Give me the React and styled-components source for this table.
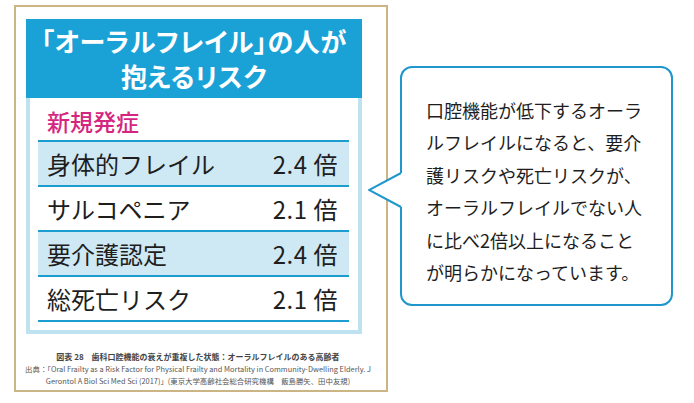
import React from "react";
import styled, { createGlobalStyle } from "styled-components";

const GlobalStyle = createGlobalStyle`
  html, body {
    margin: 0;
    padding: 0;
    background: #fff;
  }
  body {
    font-family: "Noto Sans CJK JP", "Noto Sans", sans-serif;
    color: #222;
  }
`;

const Page = styled.div`
  display: flex;
  align-items: flex-start;
  width: 694px;
  height: 403px;
  padding: 5px 0 0 14px;
  box-sizing: border-box;
`;

const Frame = styled.figure`
  margin: 0;
  width: 374px;
  height: 387px;
  box-sizing: border-box;
  border: 2px solid #cbb584;
  padding: 12px 24px 0 10px;
  display: flex;
  flex-direction: column;
`;

const Header = styled.h2`
  margin: 0;
  background: #1aa2d7;
  color: #fff;
  font-size: 26px;
  font-weight: 700;
  line-height: 35px;
  text-align: center;
  padding: 4px 0 5px;
  font-feature-settings: "palt";
  letter-spacing: 0.6px;
`;

const Panel = styled.div`
  border: 4px solid #bfe2f0;
  border-top: none;
  padding: 4px 9px 8px 8px;
  background: #fff;
`;

const Section = styled.div`
  color: #d5267f;
  font-size: 23px;
  font-weight: 500;
  line-height: 38px;
  padding-left: 9px;
`;

const Row = styled.div`
  display: flex;
  justify-content: space-between;
  align-items: center;
  height: 43px;
  border-top: 2px solid #1c9dd0;
  background: ${(p) => (p.$shaded ? "#cfe9f4" : "#fff")};
  padding: 0 11px 0 9px;
  font-size: 24px;
  color: #1e1e1e;

  &:last-child {
    border-bottom: 2px solid #1c9dd0;
  }
`;

const Value = styled.span`
  letter-spacing: 0.5px;
`;

const Caption = styled.figcaption`
  margin: 17px -16px 0 -8px;
  text-align: center;
  color: #555;
  font-size: 7.4px;
  line-height: 12px;
  white-space: nowrap;
`;

const CaptionTitle = styled.div`
  font-weight: 700;
  font-size: 8px;
  color: #444;
`;

const Bubble = styled.div`
  position: relative;
  margin: 61px 0 0 12px;
  width: 273px;
  height: 240px;
  box-sizing: border-box;
  border: 2px solid #1f97cc;
  border-radius: 12px;
  padding: 26px 0 0 24px;
`;

const BubbleText = styled.p`
  margin: 0;
  width: 220px;
  font-size: 18px;
  line-height: 32.4px;
  color: #1e1e1e;
`;

const Pointer = styled.svg`
  position: absolute;
  left: -34px;
  top: 102px;
`;

const rows = [
  { name: "身体的フレイル", value: "2.4", shaded: true },
  { name: "サルコペニア", value: "2.1", shaded: false },
  { name: "要介護認定", value: "2.4", shaded: true },
  { name: "総死亡リスク", value: "2.1", shaded: false },
];

const App = () => {
  return (
    <>
      <GlobalStyle />
      <Page>
        <Frame>
          <Header>
            「オーラルフレイル」の人が
            <br />
            抱えるリスク
          </Header>
          <Panel>
            <Section>新規発症</Section>
            {rows.map((r) => (
              <Row key={r.name} $shaded={r.shaded}>
                <span>{r.name}</span>
                <Value>{r.value} 倍</Value>
              </Row>
            ))}
          </Panel>
          <Caption>
            <CaptionTitle>図表 28　歯科口腔機能の衰えが重複した状態：オーラルフレイルのある高齢者</CaptionTitle>
            出典：「Oral Frailty as a Risk Factor for Physical Frailty and Mortality in Community-Dwelling Elderly. J
            <br />
            Gerontol A Biol Sci Med Sci (2017)」(東京大学高齢社会総合研究機構　飯島勝矢、田中友規)
          </Caption>
        </Frame>
        <Bubble>
          <Pointer width="36" height="40" viewBox="0 0 36 40">
            <path d="M36 3 L33 3 L1 20 L33 37 L36 37 Z" fill="#fff" />
            <path d="M33 3 L1 20 L33 37" fill="none" stroke="#1f97cc" strokeWidth="2" />
          </Pointer>
          <BubbleText>
            口腔機能が低下するオーラルフレイルになると、要介護リスクや死亡リスクが、オーラルフレイルでない人に比べ2倍以上になることが明らかになっています。
          </BubbleText>
        </Bubble>
      </Page>
    </>
  );
};

export default App;
